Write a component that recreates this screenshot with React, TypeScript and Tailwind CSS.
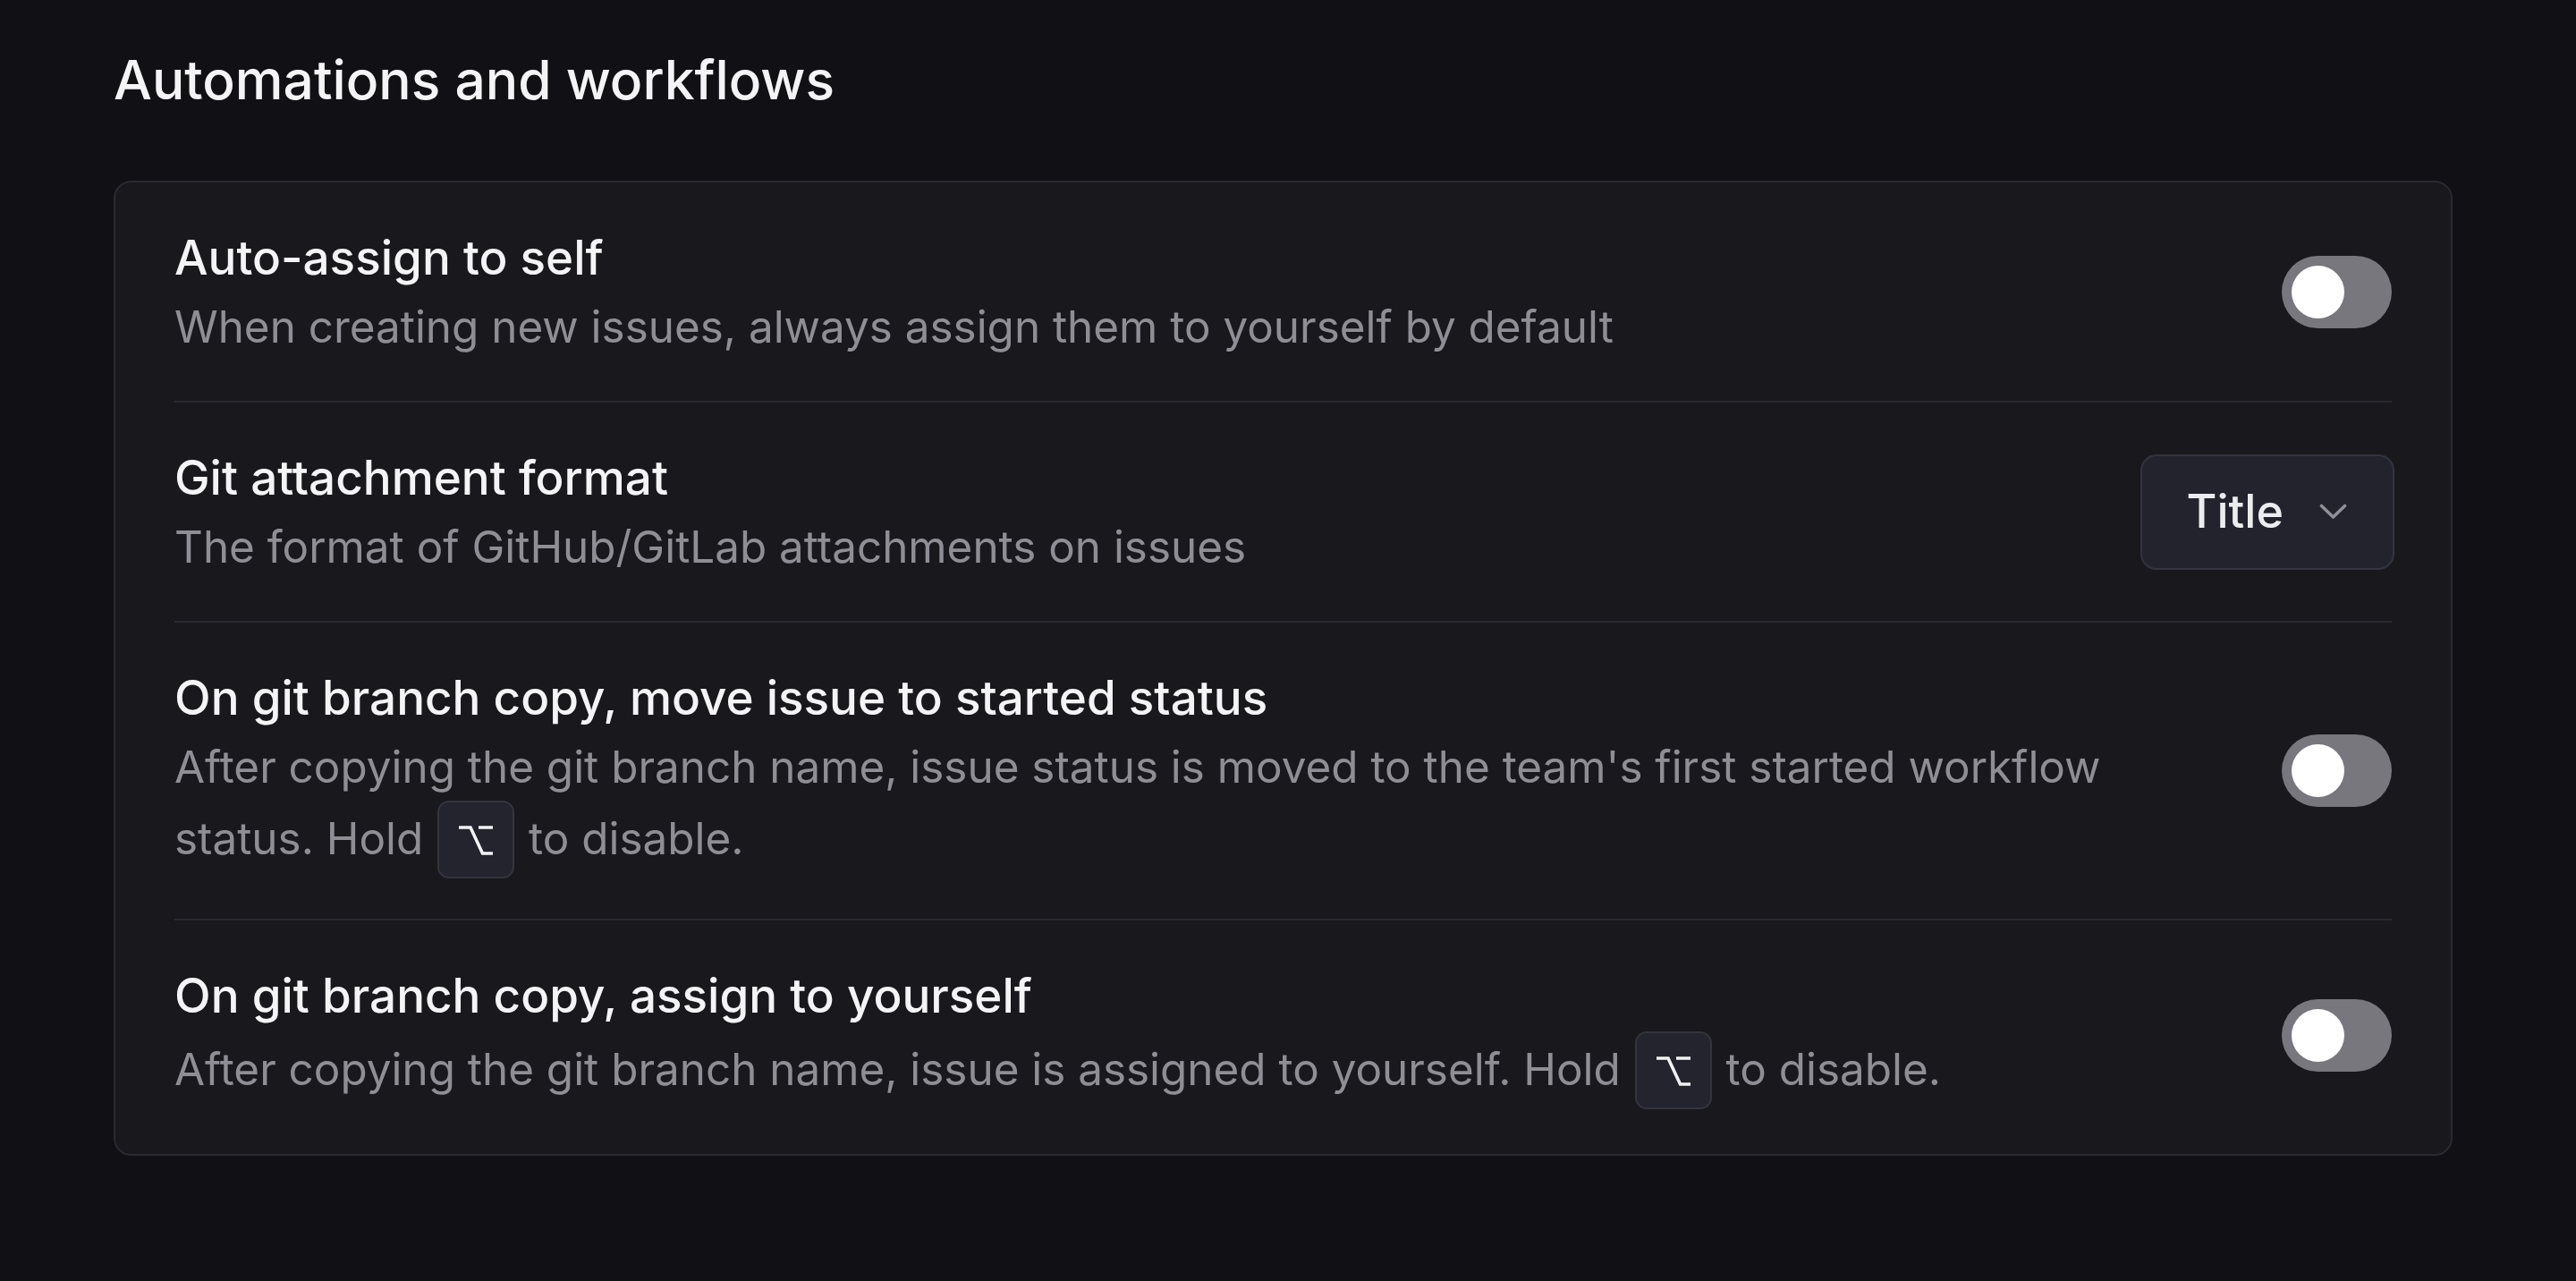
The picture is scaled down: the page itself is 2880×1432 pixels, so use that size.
import React from "react";

function Toggle() {
  return (
    <div className="flex h-[81px] w-[123px] shrink-0 items-center rounded-full bg-[#78777d] pl-[11px]">
      <div className="h-[59px] w-[59px] rounded-full bg-white" />
    </div>
  );
}

function OptionKey() {
  return (
    <span className="mx-[2px] inline-block h-[87px] w-[86px] overflow-hidden rounded-[13px] border-2 border-[#34343d] bg-[#24242e] align-[-27px]">
      <svg
        className="mx-auto mt-[26px] block"
        width="40"
        height="34"
        viewBox="0 0 40 34"
        fill="none"
        stroke="#f2f2f5"
        strokeWidth="3.6"
        strokeLinejoin="miter"
      >
        <path d="M1 2 H14 L27.5 31 H39" />
        <path d="M23 2 H39" />
      </svg>
    </span>
  );
}

function Select() {
  return (
    <div className="-mr-[3px] flex h-[129px] shrink-0 items-center gap-[40px] rounded-[18px] border-2 border-[#34343e] bg-[#23232d] pl-[50px] pr-[51px]">
      <span className="text-[52px] font-medium leading-none text-[#ececf0]">Title</span>
      <svg width="31" height="18" viewBox="0 0 31 18" fill="none" stroke="#8f8f97" strokeWidth="3.6" strokeLinecap="round" strokeLinejoin="round">
        <path d="M2.5 2.5 L15.5 15 L28.5 2.5" />
      </svg>
    </div>
  );
}

function Row({
  title,
  desc,
  control,
  last,
}: {
  title: string;
  desc: React.ReactNode;
  control: React.ReactNode;
  last?: boolean;
}) {
  return (
    <div
      className={
        "flex items-center justify-between gap-[80px] " +
        (last ? "pt-[45px] pb-[50px]" : "py-[45px] border-b-2 border-[#2a2930]")
      }
    >
      <div className="min-w-0 flex-1">
        <div className="text-[53px] font-medium leading-[79px] text-[#f4f4f6]">{title}</div>
        <div className="text-[49.4px] leading-[75px] text-[#8f8e95]">{desc}</div>
      </div>
      {control}
    </div>
  );
}

export default function App() {
  return (
    <div
      className="min-h-screen bg-[#111015] pl-[127px] pt-[44px]"
      style={{ fontFamily: "Inter, 'Noto Sans', sans-serif" }}
    >
      <h2 className="text-[60.5px] font-medium leading-[90px] text-[#f4f4f6]">Automations and workflows</h2>
      <div className="mt-[68px] w-[2615px] rounded-[20px] border-2 border-[#2b2a31] bg-[#19181d] px-[66px]">
        <Row
          title="Auto-assign to self"
          desc="When creating new issues, always assign them to yourself by default"
          control={<Toggle />}
        />
        <Row
          title="Git attachment format"
          desc="The format of GitHub/GitLab attachments on issues"
          control={<Select />}
        />
        <Row
          title="On git branch copy, move issue to started status"
          desc={
            <>
              After copying the git branch name, issue status is moved to the team's first started workflow
              status. Hold <OptionKey /> to disable.
            </>
          }
          control={<Toggle />}
        />
        <Row
          title="On git branch copy, assign to yourself"
          desc={
            <>
              After copying the git branch name, issue is assigned to yourself. Hold <OptionKey /> to disable.
            </>
          }
          control={<Toggle />}
          last
        />
      </div>
    </div>
  );
}
